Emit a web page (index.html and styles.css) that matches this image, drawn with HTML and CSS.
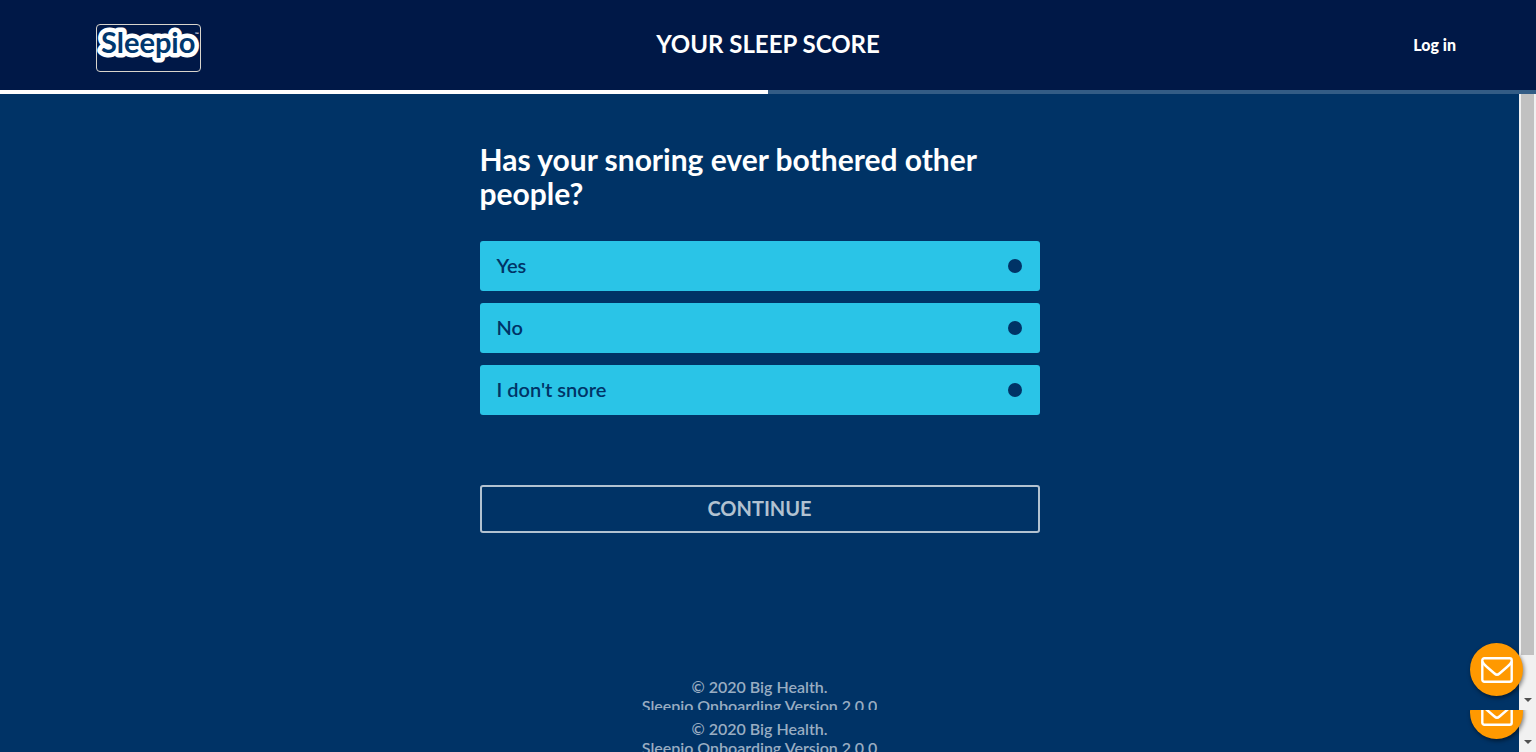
FILE: index.html
```html
<!DOCTYPE html>
<html lang="en">
<head>
<meta charset="utf-8">
<title>Sleepio - Your Sleep Score</title>
<link rel="stylesheet" href="styles.css">
</head>
<body>
<header class="header">
  <a class="logo" href="#" aria-label="Sleepio">
    <svg class="logo-art" viewBox="0 0 103 46" aria-hidden="true">
      <text class="logo-word" x="4" y="28">Sleepio</text>
      <text class="logo-mark" x="98" y="11">™</text>
    </svg>
  </a>
  <h1 class="title">YOUR SLEEP SCORE</h1>
  <a class="login" href="#">Log in</a>
</header>
<div class="progress"><div class="progress-fill" style="width:50%"></div></div>

<div class="frame">
  <main class="page">
    <form class="question">
      <h2 class="prompt" id="prompt">Has your snoring ever bothered other people?</h2>
      <div class="options" role="radiogroup" aria-labelledby="prompt">
        <label class="option" for="yes">Yes<input class="dot" type="radio" name="snore" id="yes"></label>
        <label class="option" for="no">No<input class="dot" type="radio" name="snore" id="no"></label>
        <label class="option" for="none">I don't snore<input class="dot" type="radio" name="snore" id="none"></label>
      </div>
      <button class="continue" type="button">CONTINUE</button>
    </form>
    <footer class="footer">© 2020 Big Health.<br>Sleepio Onboarding Version 2.0.0</footer>
  </main>
  <div class="track"><div class="thumb"></div><div class="arrow"></div></div>
  <button class="mail" type="button" aria-label="Contact us">
    <svg class="mail-icon" viewBox="0 0 32 26" aria-hidden="true"><rect x="1.3" y="1.3" width="29.4" height="23.4" rx="2"/><path d="M1.5 4.500C2 7 4 8.500 6 10L13.500 16.500Q16 18.800 18.500 16.500L26 10C28 8.500 30 7 30.500 4.500"/></svg>
  </button>
</div>

<div class="strip">
  <footer class="footer">© 2020 Big Health.<br>Sleepio Onboarding Version 2.0.0</footer>
  <div class="track"><div class="arrow"></div></div>
  <button class="mail" type="button" aria-label="Contact us">
    <svg class="mail-icon" viewBox="0 0 32 26" aria-hidden="true"><rect x="1.3" y="1.3" width="29.4" height="23.4" rx="2"/><path d="M1.5 4.500C2 7 4 8.500 6 10L13.500 16.500Q16 18.800 18.500 16.500L26 10C28 8.500 30 7 30.500 4.500"/></svg>
  </button>
</div>
</body>
</html>
```
FILE: styles.css
```css
* { box-sizing: border-box; }
body {
  margin: 0;
  height: 100vh;
  display: flex;
  flex-direction: column;
  overflow: hidden;
  background: #003366;
  color: #fff;
  font-family: Lato, "Open Sans", sans-serif;
}
.header {
  flex: none;
  display: grid;
  grid-template-columns: 1fr auto 1fr;
  align-items: center;
  height: 90px;
  padding: 0 80px 0 96px;
  background: #001847;
}
.logo {
  justify-self: start;
  margin-top: 6px;
  width: 105px;
  height: 48px;
  border: 1px solid #d8d4cc;
  border-radius: 4px;
}
.logo-art { display: block; width: 100%; height: 100%; overflow: visible; }
.logo-word {
  font: 700 29px Lato, sans-serif;
  fill: #00386f;
  stroke: #fff;
  stroke-width: 9px;
  stroke-linejoin: round;
  paint-order: stroke;
}
.logo-mark { font: 700 5px Lato, sans-serif; fill: #fff; }
.title { margin: 0 0 2px; padding-right: 16px; font-size: 24px; line-height: 30px; font-weight: 700; }
.login { justify-self: end; margin-bottom: 2px; color: #fff; font-size: 16px; font-weight: 900; text-decoration: none; }
.progress { flex: none; height: 4px; background: #335c85; }
.progress-fill { height: 100%; background: #fff; }
.frame { position: relative; flex: 1; min-height: 0; display: flex; overflow: hidden; }
.page { flex: 1; display: flex; flex-direction: column; align-items: center; padding-top: 48px; }
.question { width: 560px; max-width: 100%; }
.prompt { margin: 0 0 30px; font-size: 30px; line-height: 34px; font-weight: 700; }
.options { display: flex; flex-direction: column; gap: 12px; padding-top: 1px; }
.option {
  display: flex;
  align-items: center;
  justify-content: space-between;
  height: 50px;
  padding: 0 18px 2px 17px;
  border-radius: 3px;
  background: #2ac4e7;
  color: #003366;
  font-size: 20px;
  font-weight: 600;
}
.dot { appearance: none; margin: 2px 0 0; width: 14px; height: 14px; border-radius: 50%; background: #003366; }
.continue {
  display: block;
  width: 100%;
  height: 48px;
  margin-top: 70px;
  padding: 0 0 2px;
  border: 2px solid #b2c2d1;
  border-radius: 3px;
  background: transparent;
  color: #b2c2d1;
  font: 700 20px Lato, sans-serif;
}
.footer {
  height: 33px;
  margin-top: auto;
  overflow: hidden;
  text-align: center;
  color: #99adc2;
  font-size: 16px;
  line-height: 19px;
  font-weight: 600;
}
.track {
  flex: none;
  width: 17px;
  display: flex;
  flex-direction: column;
  align-items: center;
  background: #f1f1f1;
}
.thumb { width: 13px; height: 91%; background: #c1c1c1; }
.arrow { margin: auto 0 8px; border: 4px solid transparent; border-top-color: #505050; border-bottom: 0; }
.mail {
  position: absolute;
  right: 13px;
  bottom: 14px;
  width: 53px;
  height: 53px;
  padding: 0;
  display: grid;
  place-items: center;
  border: 0;
  border-radius: 50%;
  background: #ff9900;
  box-shadow: 1px 2px 4px rgba(0, 0, 0, 0.5);
}
.mail-icon { width: 32px; height: 26px; fill: none; stroke: #fff; stroke-width: 2.4; }
.strip { position: relative; flex: none; height: 42px; display: flex; overflow: hidden; }
.strip .footer { flex: 1; }
.strip .mail { bottom: 13px; }
```
